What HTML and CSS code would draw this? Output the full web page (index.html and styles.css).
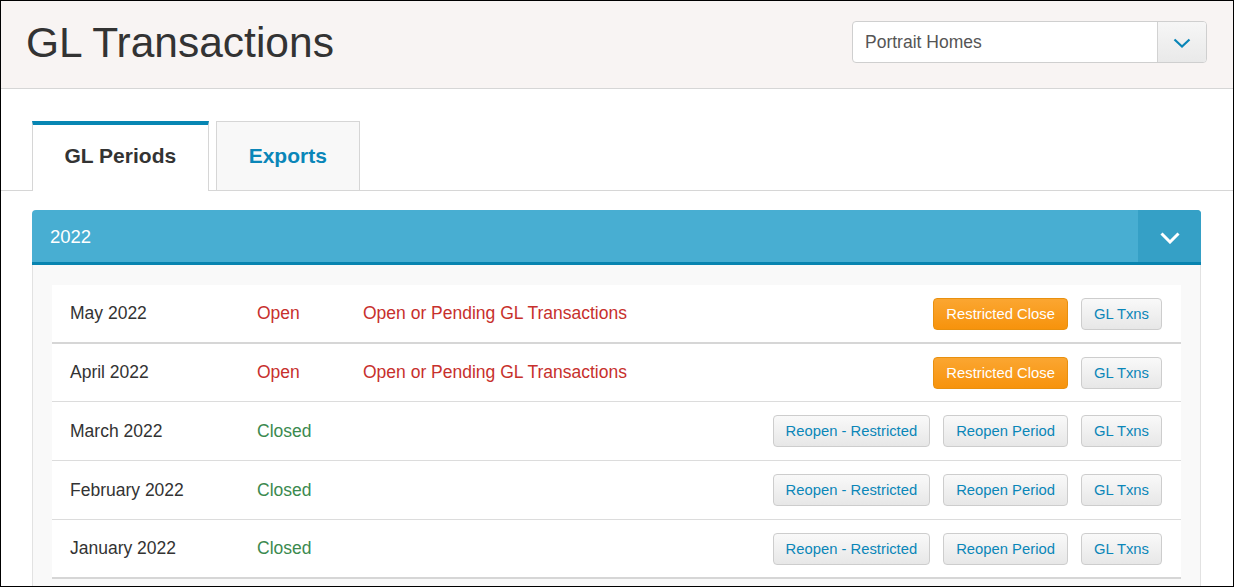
FILE: index.html
```html
<!DOCTYPE html>
<html lang="en">
<head>
<meta charset="utf-8">
<title>GL Transactions</title>
<link rel="stylesheet" href="styles.css">
</head>
<body>
<div class="frame">
  <header class="topbar">
    <h1 class="title">GL Transactions</h1>
    <div class="select">
      <div class="select-value">Portrait Homes</div>
      <div class="select-btn">
        <svg width="18" height="10" viewBox="0 0 18 10"><path d="M1.5 1.5l7.5 7 7.5-7" stroke="#0a86b8" stroke-width="2.2" fill="none"/></svg>
      </div>
    </div>
  </header>

  <nav class="tabs">
    <div class="tab tab-active">GL Periods</div>
    <div class="tab">Exports</div>
  </nav>

  <section class="panel">
    <div class="panel-head">
      <span class="panel-title">2022</span>
      <div class="panel-toggle">
        <svg width="20" height="12" viewBox="0 0 20 12"><path d="M1.5 1.5l8.5 8.5 8.5-8.5" stroke="#fff" stroke-width="3" fill="none"/></svg>
      </div>
    </div>
    <div class="panel-body">
      <div class="list">
        <div class="row">
          <span class="month">May 2022</span>
          <span class="status open">Open</span>
          <span class="desc">Open or Pending GL Transactions</span>
          <div class="actions">
            <button class="btn btn-orange">Restricted Close</button>
            <button class="btn">GL Txns</button>
          </div>
        </div>
        <div class="row">
          <span class="month">April 2022</span>
          <span class="status open">Open</span>
          <span class="desc">Open or Pending GL Transactions</span>
          <div class="actions">
            <button class="btn btn-orange">Restricted Close</button>
            <button class="btn">GL Txns</button>
          </div>
        </div>
        <div class="row">
          <span class="month">March 2022</span>
          <span class="status closed">Closed</span>
          <div class="actions">
            <button class="btn">Reopen - Restricted</button>
            <button class="btn">Reopen Period</button>
            <button class="btn">GL Txns</button>
          </div>
        </div>
        <div class="row">
          <span class="month">February 2022</span>
          <span class="status closed">Closed</span>
          <div class="actions">
            <button class="btn">Reopen - Restricted</button>
            <button class="btn">Reopen Period</button>
            <button class="btn">GL Txns</button>
          </div>
        </div>
        <div class="row">
          <span class="month">January 2022</span>
          <span class="status closed">Closed</span>
          <div class="actions">
            <button class="btn">Reopen - Restricted</button>
            <button class="btn">Reopen Period</button>
            <button class="btn">GL Txns</button>
          </div>
        </div>
      </div>
    </div>
  </section>
</div>
</body>
</html>
```
FILE: styles.css
```css
* { box-sizing: border-box; }
html, body { margin: 0; padding: 0; background: #fff; }
.frame {
  width: 1234px;
  height: 587px;
  border: 1px solid #000;
  overflow: hidden;
  background: #fff;
  font-family: "Liberation Sans", Arial, sans-serif;
  color: #333;
}
.topbar {
  display: flex;
  justify-content: space-between;
  align-items: flex-start;
  height: 88px;
  background: #f8f4f3;
  border-bottom: 1px solid #d6d6d6;
  padding: 0 26px 0 25px;
}
.title {
  margin: 0;
  padding-top: 18px;
  font-size: 42.5px;
  line-height: 48px;
  font-weight: normal;
  color: #333;
}
.select {
  margin-top: 20px;
  width: 355px;
  height: 42px;
  display: flex;
  border: 1px solid #cfcfcf;
  border-radius: 4px;
  background: #fff;
  overflow: hidden;
}
.select-value {
  flex: 1;
  display: flex;
  align-items: center;
  padding-left: 12px;
  font-size: 17.5px;
  color: #555;
}
.select-btn {
  width: 49px;
  border-left: 1px solid #d2d2d2;
  background: linear-gradient(#f6f6f6, #e9e9e9);
  display: flex;
  align-items: center;
  justify-content: center;
  padding-top: 1px;
}
.tabs {
  display: flex;
  align-items: flex-end;
  gap: 7px;
  margin-top: 32px;
  padding-left: 31px;
  height: 70px;
  border-bottom: 1px solid #d6d6d6;
}
.tab {
  height: 69px;
  padding: 0 32px;
  display: flex;
  align-items: center;
  border: 1px solid #d6d6d6;
  border-bottom: 0;
  background: #f8f8f8;
  font-size: 21px;
  font-weight: bold;
  color: #0a86b8;
}
.tab-active {
  height: 70px;
  margin-bottom: -1px;
  padding: 0 31.5px 4px;
  border-top: 4px solid #0786b3;
  background: #fff;
  color: #333;
}
.panel {
  margin: 19px 32px 0 31px;
}
.panel-head {
  height: 55px;
  display: flex;
  align-items: center;
  justify-content: space-between;
  background: #48aed2;
  border-bottom: 3px solid #0884b0;
  border-radius: 4px 4px 0 0;
  padding-left: 18px;
  color: #fff;
}
.panel-title {
  font-size: 18.5px;
  padding-top: 2px;
}
.panel-toggle {
  width: 63px;
  align-self: stretch;
  background: #35a0c6;
  border-top-right-radius: 4px;
  display: flex;
  align-items: center;
  justify-content: center;
  padding-top: 4px;
}
.panel-body {
  background: #f9f9f9;
  border-left: 1px solid #e2e2e2;
  border-right: 1px solid #e2e2e2;
  padding: 20px 19px 0;
  height: 400px;
}
.list {
  background: #fff;
}
.row {
  display: flex;
  align-items: center;
  height: 59px;
  padding: 0 19px 0 18px;
  border-bottom: 1px solid #dcdcdc;
  font-size: 17.5px;
  background: #fff;
}
.row:first-child { height: 59px; border-bottom: 2px solid #d6d6d6; }
.row:nth-child(2) { height: 58px; }
.row:last-child { height: 59px; border-bottom: 2px solid #d6d6d6; }
.month { width: 187px; color: #333; }
.status { width: 106px; }
.open { color: #c7302c; }
.closed { color: #3b8a4f; }
.desc { color: #c7302c; }
.actions {
  margin-left: auto;
  display: flex;
  gap: 13px;
}
.btn {
  height: 32px;
  padding: 0 12px;
  border: 1px solid #cdcdcd;
  border-radius: 4px;
  background: linear-gradient(#f9f9f9, #e7e7e7);
  font-family: "Liberation Sans", Arial, sans-serif;
  font-size: 14.8px;
  color: #0a86b8;
  cursor: pointer;
}
.btn-orange {
  background: linear-gradient(#fba631, #f7930c);
  border-color: #e8900f;
  color: #fff;
}
```
